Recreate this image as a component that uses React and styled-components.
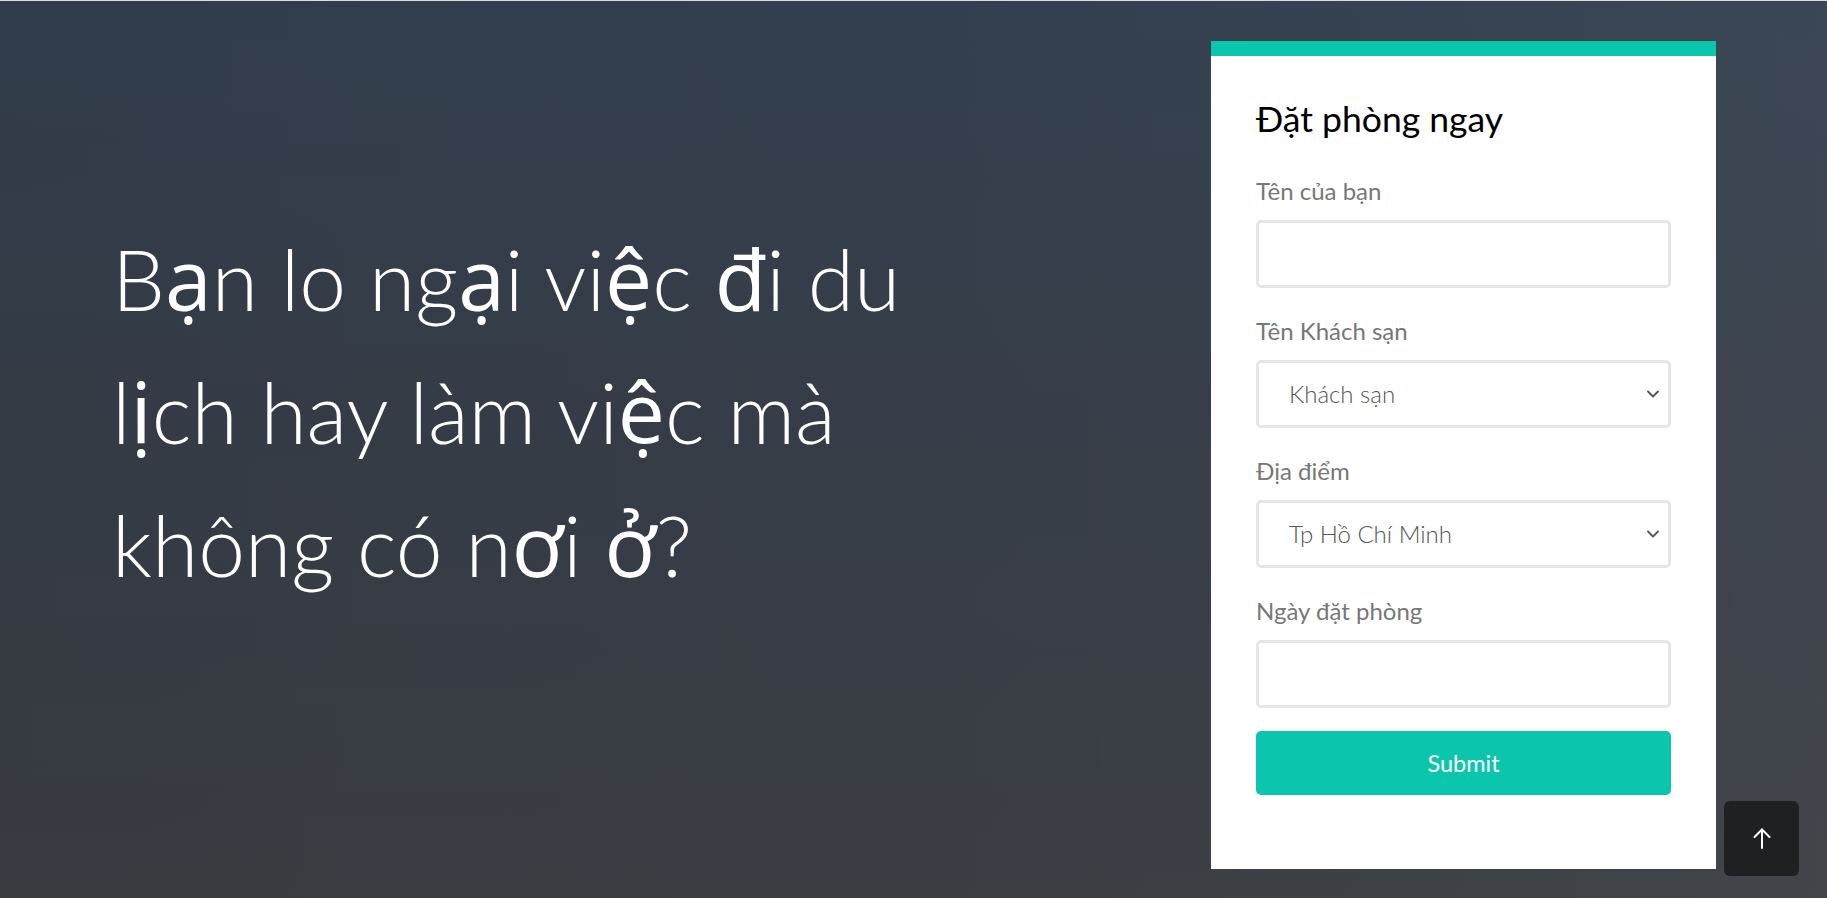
import React from "react";
import styled, { createGlobalStyle } from "styled-components";

const GlobalStyle = createGlobalStyle`
  html, body {
    margin: 0;
    padding: 0;
    height: 100%;
    overflow: hidden;
  }
  body {
    font-family: Lato, "Open Sans", "Noto Sans", sans-serif;
  }
  *, *::before, *::after { box-sizing: border-box; }
`;

const Page = styled.div`
  height: 100vh;
  border-top: 1px solid #dcdcdc;
  background:
    linear-gradient(90deg, rgba(0, 0, 0, 0.04) 0%, rgba(0, 0, 0, 0) 50%, rgba(255, 255, 255, 0.04) 100%),
    linear-gradient(180deg, #333f4e 0%, #363d48 45%, #3a3d42 100%);
`;

const Hero = styled.section`
  display: flex;
  justify-content: space-between;
  align-items: flex-start;
  padding: 40px 111px 0 112px;
`;

const HeroTitle = styled.h1`
  margin: 171px 0 0;
  font-family: Lato, "Open Sans", sans-serif;
  font-weight: 300;
  font-size: 84px;
  line-height: 133px;
  color: #ffffff;
  letter-spacing: 0;
`;

/* glyphs the light face does not carry are drawn by the system fallback face */
const Fb = styled.span`
  font-family: "Open Sans", "Noto Sans", sans-serif;
  font-weight: 400;
`;

const Card = styled.form`
  width: 505px;
  background: #ffffff;
  border-top: 15px solid #0bc6ad;
  padding: 42px 45px 74px;
`;

const CardTitle = styled.h2`
  margin: 0 0 35px;
  font-family: Lato, sans-serif;
  font-weight: 400;
  font-size: 35.5px;
  line-height: 1.2;
  color: #000000;
`;

const Field = styled.div`
  display: flex;
  flex-direction: column;
  margin-bottom: ${(p) => (p.$last ? "23px" : "28px")};
`;

const Label = styled.label`
  font-family: Lato, sans-serif;
  font-size: 24px;
  line-height: 30px;
  color: #777777;
  margin-bottom: 14px;
`;

const TextInput = styled.input`
  width: 100%;
  height: 68px;
  border: 3px solid #e6e6e6;
  border-radius: 5px;
  padding: 0 30px;
  font-family: Lato, sans-serif;
  font-size: 22px;
  color: #555;
  background: #fff;
  outline: none;
`;

const SelectWrap = styled.div`
  position: relative;
  width: 100%;
`;

const Select = styled.select`
  appearance: none;
  -webkit-appearance: none;
  width: 100%;
  height: 68px;
  border: 3px solid #e6e6e6;
  border-radius: 5px;
  padding: 0 40px 0 30px;
  font-family: Lato, sans-serif;
  font-weight: 300;
  font-size: 24px;
  color: #555555;
  background: #fff;
  outline: none;
`;

const Chevron = styled.svg`
  position: absolute;
  right: 12px;
  top: 50%;
  transform: translateY(-50%);
  pointer-events: none;
`;

const SubmitButton = styled.button`
  width: 100%;
  height: 64px;
  border: none;
  border-radius: 5px;
  background: #0bc6ad;
  color: #ffffff;
  font-family: Lato, sans-serif;
  font-weight: 400;
  font-size: 23.5px;
  cursor: pointer;
`;

const ScrollTop = styled.button`
  position: fixed;
  right: 28px;
  bottom: 22px;
  width: 75px;
  height: 75px;
  border: none;
  border-radius: 6px;
  background: #1f2021;
  display: flex;
  align-items: center;
  justify-content: center;
  cursor: pointer;
`;

const ChevronIcon = () => (
  <Chevron width="12" height="8" viewBox="0 0 12 8" fill="none">
    <path d="M1 1.5 L6 6.5 L11 1.5" stroke="#555" strokeWidth="1.8" strokeLinecap="round" strokeLinejoin="round" />
  </Chevron>
);

export default function App() {
  return (
    <>
      <GlobalStyle />
      <Page>
        <Hero>
          <HeroTitle>
            B<Fb>ạ</Fb>n lo ng<Fb>ạ</Fb>i vi<Fb>ệ</Fb>c <Fb>đ</Fb>i du
            <br />
            l<Fb>ị</Fb>ch hay làm vi<Fb>ệ</Fb>c mà
            <br />
            không có n<Fb>ơ</Fb>i <Fb>ở</Fb>?
          </HeroTitle>
          <Card onSubmit={(e) => e.preventDefault()}>
            <CardTitle>Đặt phòng ngay</CardTitle>
            <Field>
              <Label htmlFor="name">Tên của bạn</Label>
              <TextInput id="name" type="text" />
            </Field>
            <Field>
              <Label htmlFor="hotel">Tên Khách sạn</Label>
              <SelectWrap>
                <Select id="hotel" defaultValue="ks">
                  <option value="ks">Khách sạn</option>
                </Select>
                <ChevronIcon />
              </SelectWrap>
            </Field>
            <Field>
              <Label htmlFor="place">Địa điểm</Label>
              <SelectWrap>
                <Select id="place" defaultValue="hcm">
                  <option value="hcm">Tp Hồ Chí Minh</option>
                </Select>
                <ChevronIcon />
              </SelectWrap>
            </Field>
            <Field $last>
              <Label htmlFor="date">Ngày đặt phòng</Label>
              <TextInput id="date" type="text" />
            </Field>
            <SubmitButton type="submit">Submit</SubmitButton>
          </Card>
        </Hero>
        <ScrollTop aria-label="Lên đầu trang">
          <svg width="18" height="21" viewBox="0 0 18 21" fill="none">
            <path d="M9 1.5 V20" stroke="#fff" strokeWidth="2" strokeLinecap="round" />
            <path d="M1.5 9 L9 1.5 L16.5 9" stroke="#fff" strokeWidth="2" strokeLinecap="round" strokeLinejoin="round" />
          </svg>
        </ScrollTop>
      </Page>
    </>
  );
}
